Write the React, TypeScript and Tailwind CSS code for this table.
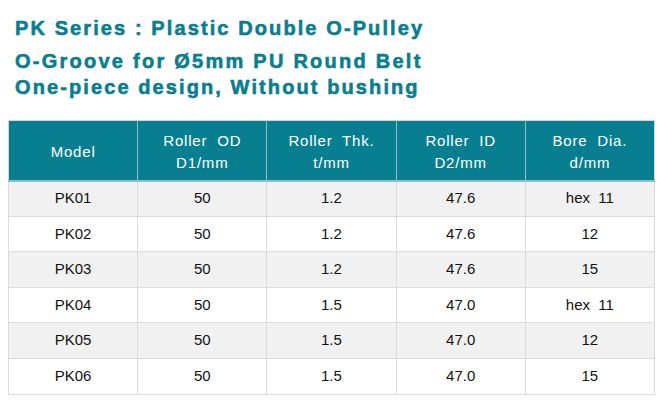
const headers: [string, string][] = [
  ["Model", ""],
  ["Roller  OD", "D1/mm"],
  ["Roller  Thk.", "t/mm"],
  ["Roller  ID", "D2/mm"],
  ["Bore  Dia.", "d/mm"],
];

const rows: string[][] = [
  ["PK01", "50", "1.2", "47.6", "hex  11"],
  ["PK02", "50", "1.2", "47.6", "12"],
  ["PK03", "50", "1.2", "47.6", "15"],
  ["PK04", "50", "1.5", "47.0", "hex  11"],
  ["PK05", "50", "1.5", "47.0", "12"],
  ["PK06", "50", "1.5", "47.0", "15"],
];

export default function App() {
  return (
    <div className="w-[666px] h-[412px] bg-white overflow-hidden font-['Liberation_Sans',Arial,sans-serif]">
      <div className="pl-[15px] pt-[18px] text-[#0a7e8f] font-bold text-[20px] leading-none [-webkit-text-stroke:0.6px_#0a7e8f]">
        <div className="h-[33px] tracking-[2.1px]">PK Series : Plastic Double O-Pulley</div>
        <div className="h-[26px] tracking-[2.25px]">O-Groove for Ø5mm PU Round Belt</div>
        <div className="h-[26px] tracking-[2.1px]">One-piece design, Without bushing</div>
      </div>
      <div className="pl-[8px] pt-[17px]">
        <table className="w-[647px] border-collapse table-fixed border border-[#d6d6d6] text-[15px]">
          <thead>
            <tr className="h-[60px] bg-[#077f91] text-white">
              {headers.map(([a, b], i) => (
                <th
                  key={i}
                  className="font-normal border-r border-b-[2px] border-[#8cbfc7] last:border-r-0 leading-[22px] pt-[3px] whitespace-pre tracking-[0.8px]"
                >
                  <div>{a}</div>
                  {b && <div>{b}</div>}
                </th>
              ))}
            </tr>
          </thead>
          <tbody>
            {rows.map((r, ri) => (
              <tr key={ri} className={`h-[35.6px] ${ri % 2 === 0 ? "bg-[#f1f1f1]" : "bg-white"}`}>
                {r.map((c, ci) => (
                  <td
                    key={ci}
                    className="text-center text-[#111] border border-[#dcdcdc] whitespace-pre"
                  >
                    {c}
                  </td>
                ))}
              </tr>
            ))}
          </tbody>
        </table>
      </div>
    </div>
  );
}
